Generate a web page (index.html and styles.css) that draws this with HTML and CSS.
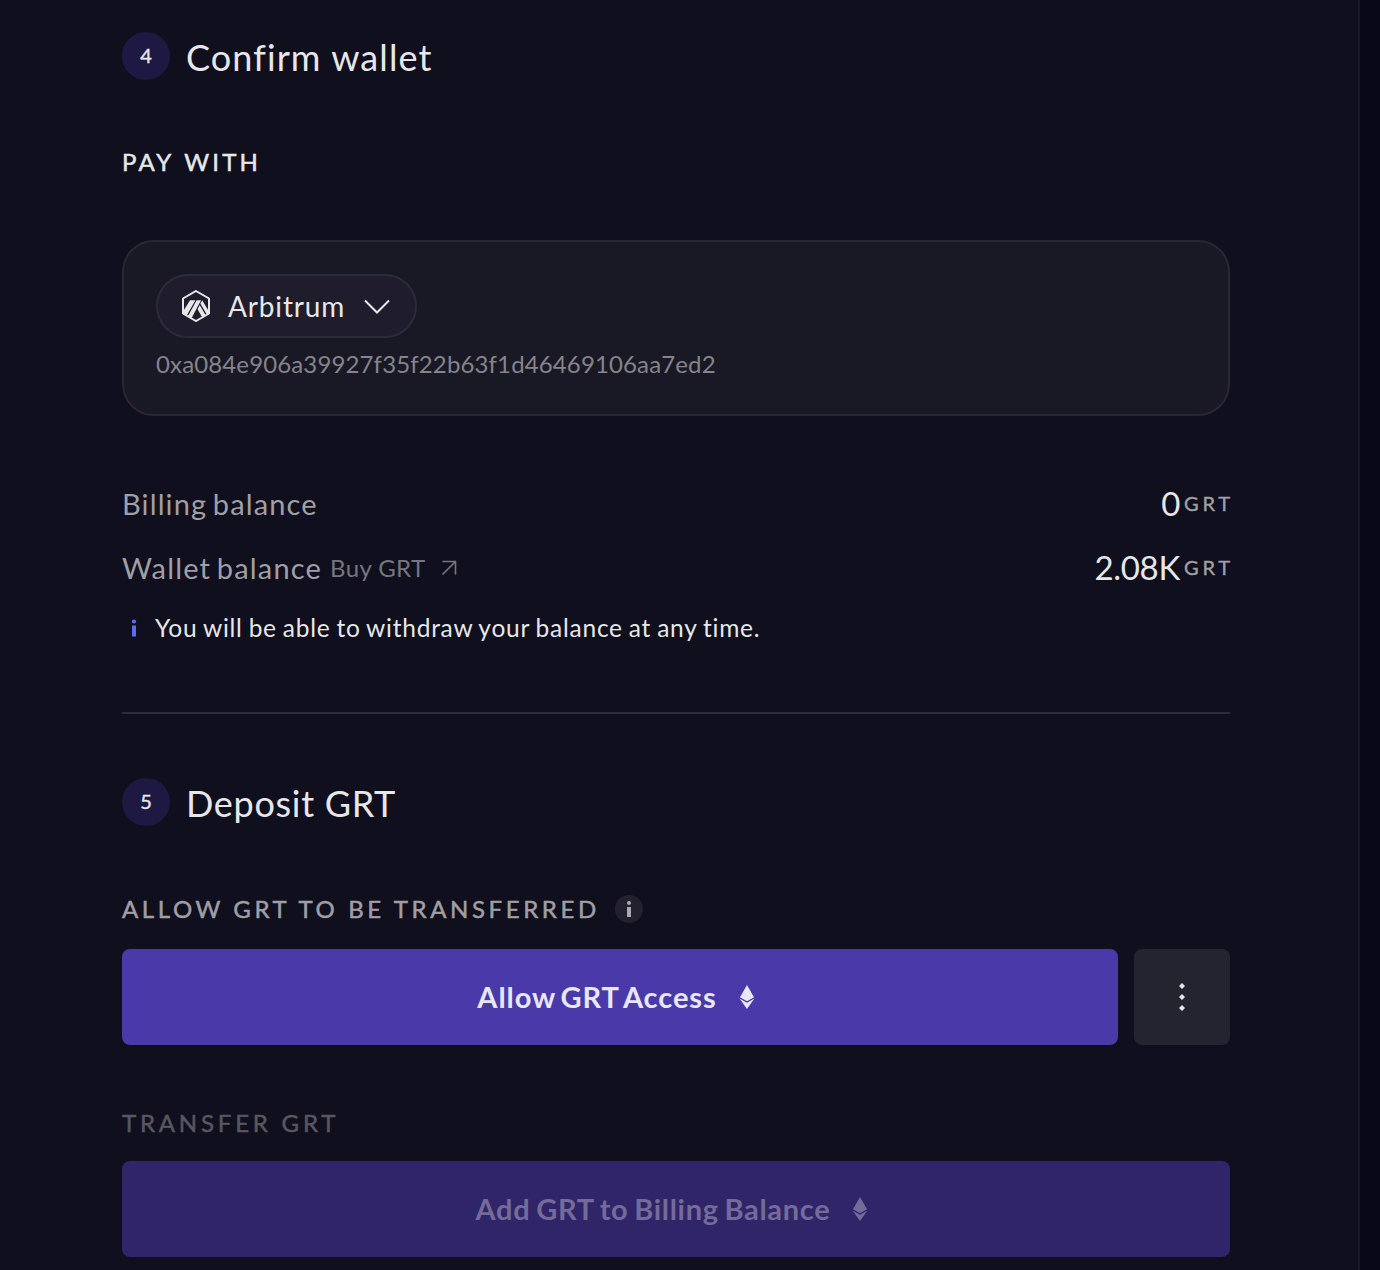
FILE: index.html
```html
<!DOCTYPE html>
<html lang="en">
<head>
<meta charset="utf-8">
<title>Billing</title>
<link rel="stylesheet" href="styles.css">
</head>
<body>
<svg width="0" height="0" class="defs" aria-hidden="true">
  <symbol id="eth" viewBox="0 0 16 24">
    <path d="M8 0 15 12.2 8 16.2 1 12.2Z"/>
    <path d="M.6 13.4 8 17.7 15.4 13.4 8 24Z"/>
  </symbol>
</svg>
<main class="panel">
  <section>
    <header class="step"><span class="badge">4</span><h2 class="title title-wallet">Confirm wallet</h2></header>
    <h3 class="label label-pay">PAY WITH</h3>
    <div class="card">
      <button class="network">
        <svg class="arb" viewBox="0 0 32 32" width="32" height="32">
          <path d="M16 1 29 8.5V23.5L16 31 3 23.5V8.5Z" fill="none" stroke="#e7e7e9" stroke-width="2"/>
          <path d="M10 10.2H15.4L6.9 25.3 3 23V21.5Z" fill="#e7e7e9"/>
          <path d="M16.6 10.2H21L11.5 28.3 7.9 26.2Z" fill="#e7e7e9"/>
          <path d="M22.2 10.2 29 21.4V23.7L27 25 20.3 13.6Z" fill="#e7e7e9"/>
          <path d="M19.7 15 25.9 25.7 22.4 27.8 17.6 19.3Z" fill="#e7e7e9"/>
        </svg>
        <span class="network-name">Arbitrum</span>
        <svg class="chevron" viewBox="0 0 26 16" width="26" height="16"><path d="M1 1.5 13 13.5 25 1.5" fill="none" stroke="#e7e7e9" stroke-width="2"/></svg>
      </button>
      <div class="address">0xa084e906a39927f35f22b63f1d46469106aa7ed2</div>
    </div>
    <div class="row">
      <span class="row-name billing">Billing balance</span>
      <span class="amount"><span class="value">0</span><span class="unit">GRT</span></span>
    </div>
    <div class="row">
      <span class="row-name wallet">Wallet balance</span>
      <a class="buy">Buy GRT</a>
      <svg class="out" viewBox="0 0 16 16" width="16" height="16"><path d="M1.5 1.5H14.5V14.5M14.5 1.5 1.5 14.5" fill="none" stroke="#77767e" stroke-width="1.6"/></svg>
      <span class="amount"><span class="value">2.08K</span><span class="unit">GRT</span></span>
    </div>
    <p class="note">
      <svg viewBox="0 0 6 18" width="6" height="18" fill="#5b6cf5"><circle cx="3" cy="2.5" r="2.1"/><path d="M1 6.5H5V17.5H1Z"/></svg>
      <span>You will be able to withdraw your balance at any time.</span>
    </p>
  </section>
  <section class="deposit">
    <header class="step"><span class="badge">5</span><h2 class="title title-deposit">Deposit GRT</h2></header>
    <div class="label label-allow"><span>ALLOW GRT TO BE TRANSFERRED</span>
      <svg class="info" viewBox="0 0 28 28" width="28" height="28"><circle cx="14" cy="14" r="14" fill="#22212d"/><g fill="#aaa9af"><circle cx="14" cy="8" r="2"/><path d="M12 12H16V22H12Z"/></g></svg>
    </div>
    <div class="actions">
      <button class="primary"><span class="allow">Allow GRT Access</span><svg class="eth" width="16" height="24"><use href="#eth"/></svg></button>
      <button class="more" aria-label="More"><svg viewBox="0 0 6 28" width="6" height="28" fill="#e7e7e9"><path d="M3 0 6 3 3 6 0 3ZM3 11 6 14 3 17 0 14ZM3 22 6 25 3 28 0 25Z"/></svg></button>
    </div>
    <div class="label label-transfer">TRANSFER GRT</div>
    <button class="primary disabled"><span class="add">Add GRT to Billing Balance</span><svg class="eth" width="16" height="24"><use href="#eth"/></svg></button>
  </section>
</main>
</body>
</html>
```
FILE: styles.css
```css
* { box-sizing: border-box; margin: 0; padding: 0; }
body { height: 1270px; overflow: hidden; background: #090817; font-family: Lato, "Open Sans", sans-serif; color: #e7e7e9; }
.defs { display: block; width: 0; height: 0; }
button { border: 0; font: inherit; color: inherit; background: none; }
svg { flex: none; }
.panel { width: 1360px; height: 1270px; padding: 32px 128px 0 122px; background: #100f1d; border-right: 2px solid #191825; }
.step { display: flex; align-items: center; gap: 16px; height: 48px; }
.badge { width: 48px; height: 48px; padding-bottom: 2px; border-radius: 50%; background: #1e1942; display: flex; align-items: center; justify-content: center; font-size: 20px; -webkit-text-stroke: .4px; }
.title { font-size: 36px; line-height: 48px; font-weight: 400; white-space: nowrap; padding-top: 1px; }
.title-wallet { letter-spacing: 1.1px; }
.title-deposit { letter-spacing: .7px; }
.label { height: 32px; line-height: 32px; font-size: 24px; font-weight: 400; white-space: nowrap; -webkit-text-stroke: .5px; }
.label-pay { margin-top: 66px; letter-spacing: 3.25px; word-spacing: 1.5px; }
.card { margin-top: 62px; height: 176px; padding: 32px; border: 2px solid #282733; border-radius: 32px; background: #191825; }
.network { display: flex; align-items: center; width: 261px; height: 64px; padding-left: 22px; border: 2px solid #2d2b39; border-radius: 32px; background: #1f1c2b; font-size: 28px; }
.network-name { width: 136px; margin-left: 16px; text-align: left; letter-spacing: .85px; }
.chevron { margin-top: 2px; }
.address { margin-top: 9px; font-size: 24px; line-height: 34px; color: #85848b; letter-spacing: .13px; white-space: nowrap; }
.row { display: flex; align-items: center; height: 64px; font-size: 28px; white-space: nowrap; color: #a09fa5; }
.card + .row { margin-top: 56px; }
.row-name { font-size: 29px; word-spacing: -3px; padding-bottom: 1px; }
.billing { letter-spacing: 1.13px; }
.wallet { width: 208px; letter-spacing: 1.18px; }
.buy { width: 111px; padding-bottom: 2px; font-size: 24px; letter-spacing: .4px; color: #77767e; }
.amount { margin-left: auto; padding-bottom: 2px; display: flex; align-items: center; gap: 4px; }
.value { font-size: 33px; letter-spacing: -.3px; color: #e7e7e9; }
.unit { width: 46px; font-size: 20px; letter-spacing: 3.8px; -webkit-text-stroke: .4px; }
.note { display: flex; align-items: center; height: 56px; padding-left: 9px; gap: 18px; font-size: 24.5px; white-space: nowrap; }
.note span { padding-bottom: 1px; letter-spacing: .75px; word-spacing: -1px; }
.deposit { margin-top: 56px; padding-top: 64px; border-top: 2px solid #2d2c38; }
.label-allow { display: flex; align-items: center; margin-top: 67px; color: #a09fa5; letter-spacing: 3.6px; }
.label-allow span { width: 493px; }
.info { -webkit-text-stroke: 0; }
.actions { display: flex; gap: 16px; margin-top: 24px; }
.primary { flex: 1; display: flex; align-items: center; justify-content: center; width: 100%; height: 96px; border-radius: 8px; background: #4a3aa9; color: #e9e7f5; font-size: 29px; font-weight: 700; white-space: nowrap; }
.allow { padding-bottom: 2px; letter-spacing: .92px; word-spacing: -3px; }
.add { padding-bottom: 2px; letter-spacing: .7px; word-spacing: -2px; }
.eth { fill: currentColor; margin: 0 8px 0 22px; }
.more { display: flex; align-items: center; justify-content: center; width: 96px; height: 96px; border-radius: 8px; background: #242330; }
.label-transfer { margin-top: 62px; color: #58575f; letter-spacing: 3.8px; }
.disabled { margin-top: 22px; background: #2f2568; color: #746b9b; }
```
